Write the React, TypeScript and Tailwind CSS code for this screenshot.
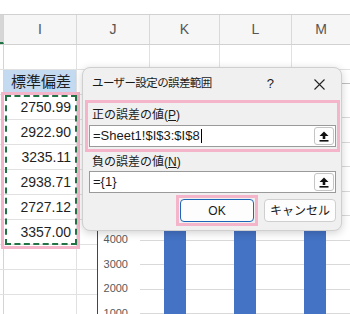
import React from 'react';

const jp = { fontFamily: '"Liberation Sans", "Noto Sans CJK JP", sans-serif' };

const values = ['2750.99', '2922.90', '3235.11', '2938.71', '2727.12', '3357.00'];
const gridLines = [9, 8, 7, 6, 5, 4, 3, 2, 1, 0];
const ticks = ['4000', '3000', '2000', '1000', '0'];

const UploadIcon = () => (
  <span className="flex h-[18px] w-[20px] items-center justify-center rounded-[3px] border border-[#c4c4c4] bg-[#fdfdfd]">
    <svg width="10" height="11" viewBox="0 0 10 11">
      <path d="M5 0.5 L9.5 5 L6.3 5 L6.3 8 L3.7 8 L3.7 5 L0.5 5 Z" fill="#111" />
      <rect x="0.5" y="9" width="9" height="1.6" fill="#111" />
    </svg>
  </span>
);

// one grid row of the sheet, column I content passed in
const SheetRow = ({ cellI, blue = false }: { cellI?: React.ReactNode; blue?: boolean }) => (
  <div className="flex h-[25px] border-b border-[#e1e1e1]">
    <div className="w-[4px] shrink-0 border-r border-[#d4d4d4]" />
    <div
      className={`flex w-[73px] shrink-0 items-center justify-end border-r border-[#e1e1e1] pr-[5px] text-[14px] text-[#1f1f1f] ${
        blue ? 'justify-center bg-[#c3daf0] pr-0' : ''
      }`}
    >
      {cellI}
    </div>
    <div className="w-[73px] shrink-0 border-r border-[#e1e1e1]" />
    <div className="w-[70px] shrink-0 border-r border-[#e1e1e1]" />
    <div className="w-[72px] shrink-0 border-r border-[#e1e1e1]" />
    <div className="flex-1" />
  </div>
);

const App: React.FC = () => {
  return (
    <div className="relative h-[314px] w-[350px] overflow-hidden bg-white" style={jp}>
      {/* sheet */}
      <div className="h-[14px]" />
      <div className="flex h-[31px] border-y border-[#d1d1d1] bg-[#f6f6f6] text-[14px] text-[#555]">
        <div className="w-[4px] shrink-0 border-b-2 border-r border-b-[#217346] border-r-[#d4d4d4] bg-[#d6d6d6]" />
        <div className="flex w-[73px] shrink-0 items-center justify-center border-r border-[#d9d9d9]">I</div>
        <div className="flex w-[73px] shrink-0 items-center justify-center border-r border-[#d9d9d9]">J</div>
        <div className="flex w-[70px] shrink-0 items-center justify-center border-r border-[#d9d9d9]">K</div>
        <div className="flex w-[72px] shrink-0 items-center justify-center border-r border-[#d9d9d9]">L</div>
        <div className="flex flex-1 items-center justify-center">M</div>
      </div>
      <SheetRow />
      <SheetRow blue cellI={<span className="text-[15px]">標準偏差</span>} />
      {values.map((v) => (
        <SheetRow key={v} cellI={v} />
      ))}
      <SheetRow />
      <SheetRow />
      <SheetRow />

      {/* selected range: marching ants and pink marker */}
      <div className="absolute left-[5px] top-[95px] h-[150px] w-[72px] border-2 border-dashed border-[#217346]" />
      <div className="absolute left-[1px] top-[92px] h-[157px] w-[79px] border-[3px] border-[#f4b4c9]" />

      {/* chart object */}
      <div className="absolute left-[97px] top-[83px] flex h-[300px] w-[300px] border-l border-t border-l-[#454545] border-t-[#bfbfbf] bg-white">
        <div className="w-[42px] shrink-0 pr-[12px] pt-[143px] text-right text-[11px] text-[#595959]">
          {ticks.map((t) => (
            <div key={t} className="flex h-[24.5px] items-center justify-end">
              {t}
            </div>
          ))}
        </div>
        <div className="relative flex-1">
          <div className="absolute inset-x-0 top-[33px] flex flex-col">
            {gridLines.map((g) => (
              <div key={g} className="h-[24.5px] border-t border-[#d9d9d9]" />
            ))}
          </div>
          <div className="relative flex gap-[48px] pl-[24px] pt-[60px]">
            <div className="h-[300px] w-[22px] bg-[#4472c4]" />
            <div className="h-[300px] w-[22px] bg-[#4472c4]" />
            <div className="h-[300px] w-[22px] bg-[#4472c4]" />
          </div>
        </div>
      </div>

      {/* dialog */}
      <div className="absolute left-[82px] top-[67px] flex h-[164px] w-[260px] flex-col rounded-[8px] border border-[#cfcfcf] bg-[#f0f0f0] text-[12px] text-[#1a1a1a] shadow-[0_2px_8px_rgba(0,0,0,0.18)]">
        <div className="flex h-[32px] shrink-0 items-center pl-[9px]">
          <span className="text-[11.5px] tracking-[-0.6px]">ユーザー設定の誤差範囲</span>
          <span className="ml-auto mr-[40px] text-[13px]">?</span>
          <svg className="mr-[16px]" width="11" height="11" viewBox="0 0 11 11">
            <path d="M0.5 0.5 L10.5 10.5 M10.5 0.5 L0.5 10.5" stroke="#222" strokeWidth="1.1" />
          </svg>
        </div>

        <div className="ml-[2px] mr-[1px] border-[3px] border-[#f4b4c9] px-[1px] pb-[2px] pt-[2px]">
          <div className="flex h-[20px] items-center pl-[3px]">
            正の誤差の値(<span className="underline">P</span>)
          </div>
          <div className="flex h-[22px] items-center border border-[#9a9a9a] bg-white pl-[3px] pr-[1px]">
            <span className="text-[13px]">=Sheet1!$I$3:$I$8</span>
            <span className="ml-[1px] h-[14px] w-px bg-black" />
            <span className="ml-auto">
              <UploadIcon />
            </span>
          </div>
        </div>

        <div className="flex h-[19px] items-center pl-[9px]">
          負の誤差の値(<span className="underline">N</span>)
        </div>
        <div className="ml-[6px] mr-[5px] flex h-[22px] items-center border border-[#9a9a9a] bg-white pl-[3px] pr-[1px]">
          <span className="text-[13px]">={'{1}'}</span>
          <span className="ml-auto">
            <UploadIcon />
          </span>
        </div>

        <div className="mt-[2px] flex items-center justify-end gap-[6px] pr-[5px]">
          <div className="border-[3px] border-[#f4b4c9] p-[1px]">
            <button className="flex h-[23px] w-[74px] items-center justify-center rounded-[4px] border border-[#1d67b8] bg-[#fdfdfd] text-[12px]">
              OK
            </button>
          </div>
          <button className="flex h-[23px] w-[72px] items-center justify-center rounded-[4px] border border-[#cfcfcf] bg-[#fdfdfd] text-[12px]">
            キャンセル
          </button>
        </div>
      </div>
    </div>
  );
};

export default App;
